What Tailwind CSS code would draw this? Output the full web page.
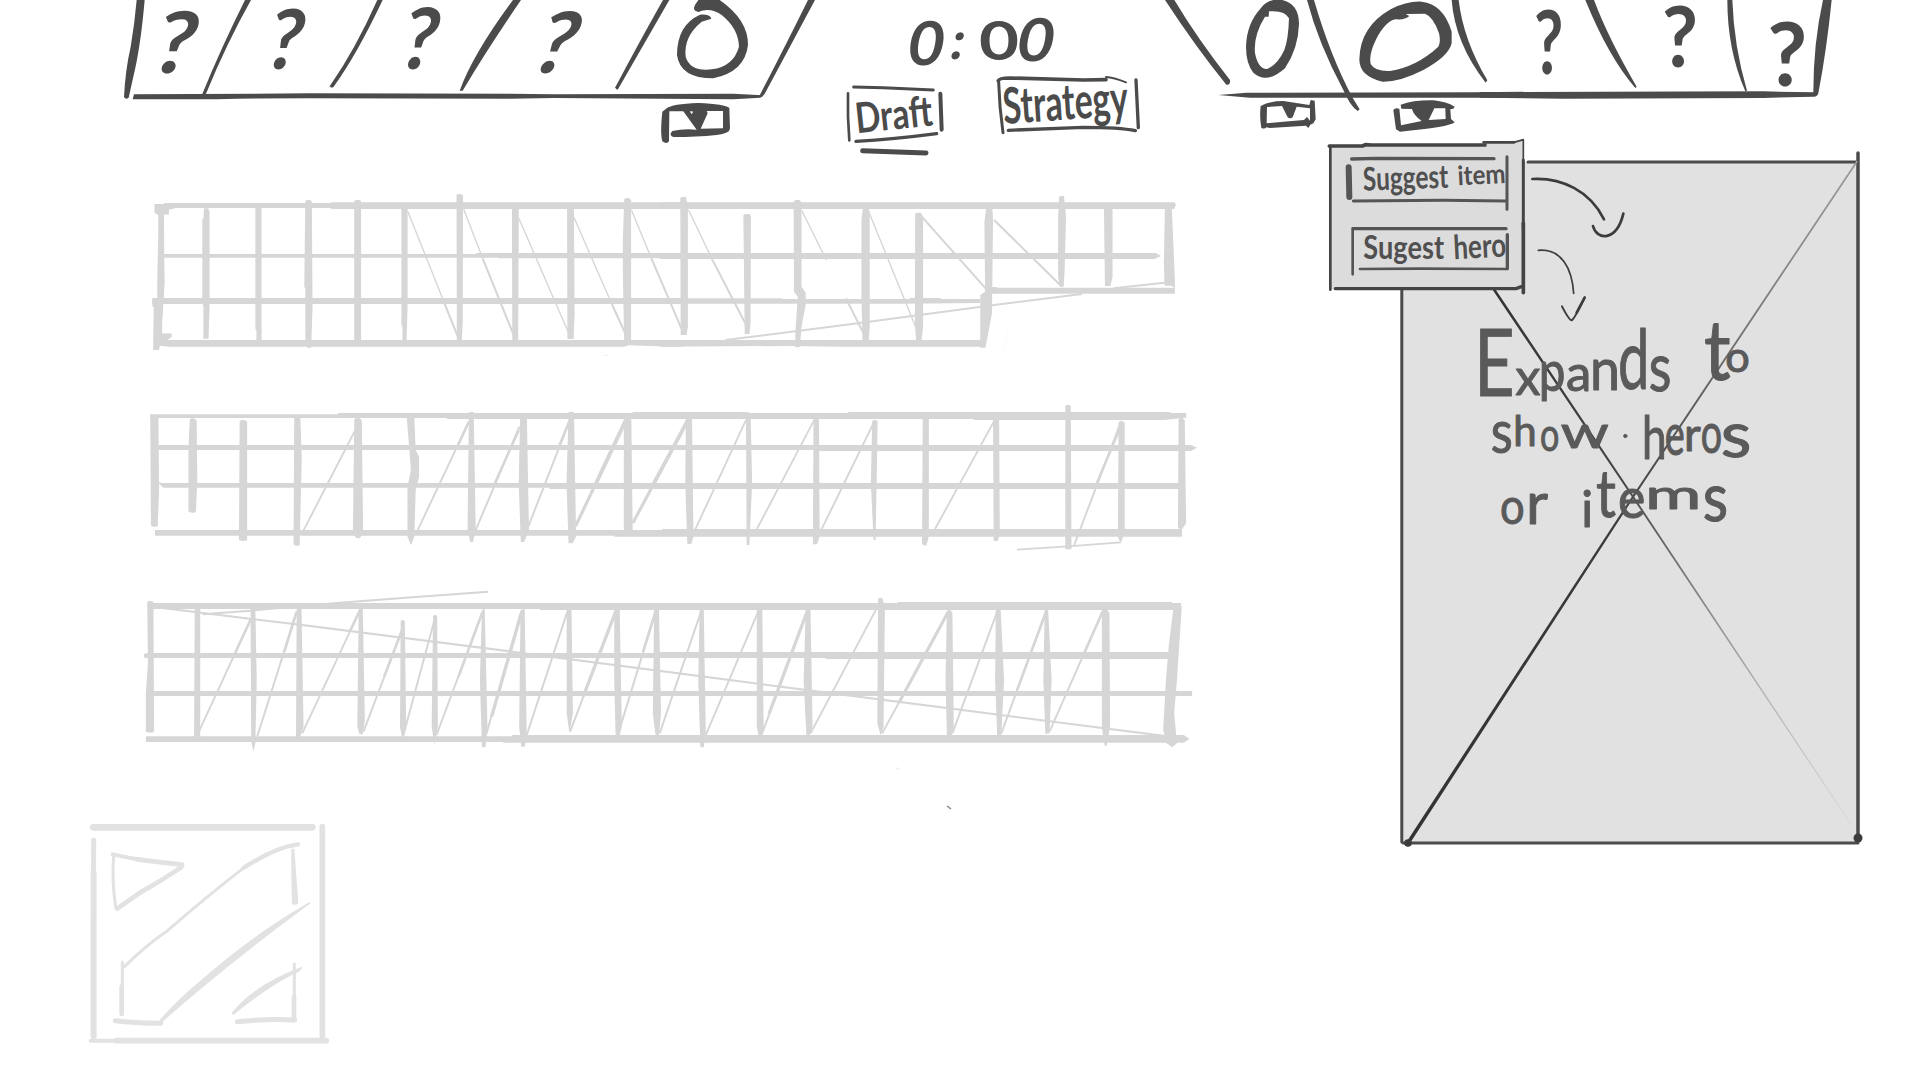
<!DOCTYPE html>
<html lang="en">
<head>
<meta charset="utf-8">
<title>Draft strategy wireframe</title>
<script src="https://cdn.jsdelivr.net/npm/@tailwindcss/browser@4"></script>
</head>
<body class="bg-white">
<div class="flex h-[1080px] w-[1920px] flex-col overflow-hidden bg-white font-[Lato,sans-serif] text-[#4b4b4b]">

<!-- Hero bar, timer and mode buttons -->
<header class="h-[144px] w-full shrink-0">
<svg class="block overflow-visible" width="1920" height="144" viewBox="0 0 1920 144" fill="currentColor">
  <!-- left team slots -->
  <g transform="translate(110 0) scale(.33333)">
    <path d="M80 0H104Q92 140 70 230L56 293Q48 300 42 291Q46 210 62 140Q74 70 80 0Z"/>
    <path d="M72 283L600 280L1200 281V296L600 295L380 296L320 298L68 298Z"/>
    <path d="M405 0H423Q350 130 288 281L276 284Q335 140 405 0Z"/>
    <path d="M802 0H818Q740 165 671 260Q664 266 659 259Q735 150 802 0Z"/>
    <g font-weight="700">
      <text transform="translate(116 218) skewX(-14) scale(1.05 1)" font-size="256">?</text>
      <text transform="translate(458 208) skewX(-12) scale(.93 1)" font-size="248">?</text>
      <text transform="translate(860 208) skewX(-12) scale(.93 1)" font-size="254">?</text>
    </g>
  </g>
  <g transform="translate(450 0) scale(.33333)">
    <path d="M189 0H213Q110 150 38 272L29 272Q70 160 189 0Z"/>
    <path d="M180 281L310 283L850 281L937 286L932 293L850 298L310 294L180 296Z"/>
    <path d="M639 0H658L504 268Q498 271 496 262Q560 140 639 0Z"/>
    <path d="M1074 0H1095L945 280Q936 296 928 288Q1000 150 1074 0Z"/>
    <text transform="translate(234 218) skewX(-20)" font-size="254" font-weight="700">?</text>
    <path d="M745 0H809Q895 60 894 135Q885 215 790 235Q690 235 681 165Q681 75 750 44Q780 42 784 56L755 65Q700 110 707 170Q720 215 785 208Q850 200 867 140Q865 85 815 45Q780 20 745 36Q726 32 735 15Z"/>
    <path d="M650 325Q665 312 745 309Q825 312 838 324L840 385Q840 401 800 405Q740 411 670 411Q655 405 667 393Q700 385 740 389L700 334H658L657 424Q650 434 637 424Q630 400 637 335ZM773 340L752 386L819 385V333H770Z" fill-rule="evenodd"/>
    <path d="M720 333L724 343L730 335Z" fill="white"/>
  </g>

  <!-- timer and mode buttons -->
  <g transform="translate(830 0) scale(.33333)">
    <g font-size="176" font-weight="700">
      <text transform="translate(227 194) skewX(-9)" font-size="182" textLength="106" lengthAdjust="spacingAndGlyphs">0</text>
      <text transform="translate(354 176) skewX(-12)" font-size="160">:</text>
      <text x="447" y="179" font-size="158" textLength="120" lengthAdjust="spacingAndGlyphs">0</text>
      <text transform="translate(554 183) skewX(-10)" font-size="178" textLength="108" lengthAdjust="spacingAndGlyphs">0</text>
    </g>
    <g fill="none" stroke="currentColor" stroke-linecap="round">
      <path d="M71 261L160 263L310 270" stroke-width="9"/>
      <path d="M54 280V350L58 421" stroke-width="8"/>
      <path d="M331 281L335 389" stroke-width="12"/>
      <path d="M78 424Q190 418 320 401" stroke-width="10"/>
      <path d="M98 452L288 459" stroke-width="15"/>
      <path d="M505 242Q508 234 540 234L760 240L828 239" stroke-width="11"/>
      <path d="M828 231Q850 232 888 247" stroke-width="6"/>
      <path d="M506 246Q508 320 519 398" stroke-width="9"/>
      <path d="M535 391L760 382Q870 382 916 392" stroke-width="10"/>
      <path d="M918 240L925 383" stroke-width="10"/>
    </g>
    <g font-weight="700">
      <text transform="translate(80 400) rotate(-6)" font-size="126" textLength="232" lengthAdjust="spacingAndGlyphs">Draft</text>
      <text transform="translate(522 372) rotate(-4)" font-size="150" textLength="376" lengthAdjust="spacingAndGlyphs">Strategy</text>
    </g>
  </g>

  <!-- right team slots -->
  <g transform="translate(1150 0) scale(.33333)">
    <path d="M45 0H73Q145 120 240 240Q242 256 229 254Q140 145 45 0Z"/>
    <path d="M205 285L290 278L970 277L1120 275V293H300Z"/>
    <path d="M471 0H492Q540 165 606 290L629 328L623 333Q600 318 580 270Q505 130 471 0Z"/>
    <path d="M905 0H926Q940 120 1012 241L1007 248Q915 130 905 0Z"/>
    <path d="M333 24Q350 0 385 -2Q447 5 447 72Q445 145 405 205Q350 254 310 218Q288 190 288 140Q290 70 333 24ZM357 34L356 50L345 50Q310 105 315 160Q325 208 351 207Q382 195 403 150Q415 120 417 55Q405 30 357 34Z" fill-rule="evenodd"/>
    <path d="M722 28Q770 3 815 5Q880 12 905 95V130Q895 170 820 210Q750 246 698 245Q628 230 628 178Q630 80 722 28ZM767 42L778 48Q765 60 740 58Q715 57 685 105Q655 160 662 192Q675 215 720 213Q800 200 865 140Q873 125 867 100Q850 50 825 41Z" fill-rule="evenodd"/>
    <path d="M332 318Q360 303 400 303L478 315L482 300L494 302L497 358L490 370L481 374L475 384L468 377L360 384L349 382Q345 388 334 384Q328 350 332 318ZM351 321L350 370L400 365L462 360L471 351L480 362V325L440 320L428 352Q420 358 413 352L396 318Z" fill-rule="evenodd"/>
    <path d="M752 314Q790 300 850 301Q890 305 914 320L910 326L901 328L903 357L914 367Q900 378 830 386L750 395L738 388L730 330Q735 322 748 326L753 376L815 363Q790 345 786 327L754 326ZM853 325L836 360L887 357L886 325Z" fill-rule="evenodd"/>
  </g>
  <g transform="translate(1480 0) scale(.33333)">
    <path d="M0 276L850 274L1000 277Q1000 130 1029 0H1055Q1040 150 1015 280Q1012 291 1000 290L850 294L250 296L0 293Z"/>
    <path d="M316 0H342Q385 115 470 260L466 264Q385 170 316 0Z"/>
    <path d="M742 0H757Q762 140 801 272L796 274Q742 150 742 0Z"/>
    <g font-weight="700">
      <text x="162" y="223" font-size="266" textLength="88" lengthAdjust="spacingAndGlyphs">?</text>
      <text x="546" y="202" font-size="250" textLength="108" lengthAdjust="spacingAndGlyphs">?</text>
      <text x="862" y="257" font-size="266" textLength="120" lengthAdjust="spacingAndGlyphs">?</text>
    </g>
  </g>
</svg>
</header>

<main class="flex min-h-0 flex-1">
<div class="flex w-[1310px] shrink-0 flex-col">

<!-- Hero grids -->
<section class="h-[646px] text-[#d6d6d6]">
<svg class="block overflow-visible" width="1310" height="646" viewBox="0 144 1310 646" fill="currentColor">
  <g transform="translate(140 180) scale(.34439 .33333)">
    <path d="M42 72H70V69H555V67H1575V87H555V84H105L84 90V104H70L72 310L65 430V460H93V470L80 480H1575V500H1545L1420 496L1405 500H82L58 497L55 510H38L40 380H36V354H50V300L53 170V105L42 98Z" />
    <path fill="white" d="M105 84H555V87H1568V480H82L92 470V460H65V430L72 310L70 104H84V90Z"/>
    <path d="M70 222H976V219H1575V235H1040V233H70ZM36 354H1575V372H36Z"/>
    <path d="M186 85H198L202 96V380L199 476H184V378L181 370V118L184 116ZM335 84H353V490H338V450L335 448ZM480 62L485 60H495L499 66L501 380L497 503H485L480 478V325L477 320ZM622 64L627 60H637L642 64V490H622ZM759 85H777V380L774 485H762V440L759 435ZM919 45L924 42H931L938 46L937 430L934 485H920ZM1080 85H1100L1098 485H1081ZM1240 85H1260L1262 400L1259 477H1241ZM1406 58L1411 54H1420L1426 60V490H1406L1402 280V180Z"/>
    <g stroke="currentColor" fill="none" stroke-width="4">
      <path d="M778 95L885 372M940 88L995 235M1100 115L1243 455M1260 112L1370 372M1427 90L1485 235"/>
      <path stroke-width="6" d="M884 370L925 475M995 235L1085 465M1370 372L1410 462M1485 235L1572 445"/>
    </g>
    <path d="M1347 524H1360V528H1347Z" opacity=".35"/>
  </g>
  <g transform="translate(660 180) scale(.34439 .33333)">
    <path d="M0 67H1494L1498 75L1493 87H0ZM0 219H1440L1455 228L1435 237H0ZM0 355H355V357H725V354H815V357H930V369L700 371H0ZM0 480H940V500H520L370 498L0 500ZM945 321H978V323H1495V341H960Z"/>
    <path d="M59 55L63 51H75L77 60L81 80V440L77 465H60ZM242 106L247 102H260L264 108L263 430L260 462H246ZM388 65L393 60H405L411 67V320L423 338V375L411 440L406 502H393V458L400 350L389 335ZM589 85H605L609 95V440L606 485H588L585 350V118ZM741 102L745 98H757L764 110V440L759 485H744L740 430ZM947 85H965L967 120L964 400L945 503H930V345L944 335L942 125ZM1159 50L1163 48H1173L1179 110L1175 270L1172 320H1161L1156 290V110ZM1289 85H1314V290L1308 318H1292ZM1466 85H1486L1491 200L1495 300V325L1485 317H1465L1463 250Z"/>
    <g stroke="currentColor" fill="none" stroke-width="4">
      <path d="M83 90L150 235M412 92L470 213L483 240M608 100L742 440"/>
      <path stroke-width="6" d="M150 235L250 435M762 112L948 328M970 120L1165 318M540 355L592 462M190 480L575 430L965 376L1225 342M1318 325L1465 308"/>
      <path opacity=".2" stroke-width="2" d="M1010 455L995 527"/>
    </g>
  </g>
  <g transform="translate(140 390) scale(.6824 .33333)">
    <path d="M15 73H290V69H722V66H892V69H1038V66H1510V69H1533V83L1500 90H1222V87H450V84H15ZM26 165H1540L1549 173L1540 183H990V180H26ZM26 277L34 279H1531V297H600V293H34ZM22 420H765V417H1527V440H695V437H22Z"/>
    <path d="M15 75H27L28 300L26 408Q20 414 16 406ZM73 88L77 84L83 90L84 270L82 366Q77 372 71 364V180ZM146 92L151 89L157 94V451Q151 456 145 450ZM226 84H235L237 200L234 465Q229 471 225 463ZM314 87L320 82L325 90L327 430L322 445L316 443L312 420ZM391 84H402L404 180L409 200V260L404 300L402 440L397 466L392 440V290L397 240ZM482 66H489L492 420L488 456H484L480 420ZM557 84L567 87L570 420L563 456H558L555 280ZM628 66H636L639 440L634 460H628L625 280ZM709 86L720 88L722 425H709ZM800 86H809L811 440L808 462H802L799 280ZM888 86H895L897 280L893 465H889ZM987 86H995L996 440L992 463H986ZM1073 92L1077 89L1081 94L1078 450H1075L1071 280ZM1147 86H1156V440L1152 468L1146 463ZM1250 88H1259L1260 430L1257 453H1251ZM1356 46Q1360 42 1364 47L1365 478H1356ZM1434 96L1439 92L1443 98V430L1437 460L1433 440ZM1522 86L1527 83L1531 90L1533 400L1527 418L1521 415Z"/>
    <g stroke="currentColor" fill="none" stroke-width="3">
      <path d="M318 110L240 420M482 95L407 420M556 110L492 420M629 95L569 410M888 90L814 417M988 90L904 417M1076 95L999 417M1252 92L1165 417M1437 98L1369 465"/>
      <path stroke-width="4" d="M482 95L466 165M555 120L520 280M629 95L612 180M1437 110L1400 290"/>
      <path stroke-width="5" d="M712 90L638 410M803 90L722 400"/>
      <path stroke-width="6" d="M712 90L666 290M803 90L753 280"/>
      <path stroke-width="5" d="M1285 479L1360 469L1437 457"/>
    </g>
  </g>
  <g transform="translate(130 580) scale(.68878 .33333)">
    <path d="M26 69H1115V66H1513V69H1526V90H595V87H26ZM20 222L26 219H765V216H1507V237H1010V234H21ZM24 333H1542V348H24ZM23 469H555V465H1530L1538 477L1530 488H542V486H23Z"/>
    <path d="M25 65Q30 60 34 66L35 455Q30 462 23 455V340L26 250ZM94 85H102V470H93ZM175 87H182L184 300L182 490L179 515L176 480ZM242 87H249L252 440L247 470H241ZM332 87L338 86L341 420L338 463H333L330 440ZM393 123Q396 117 399 124L401 440L396 488L392 440ZM440 108Q443 102 446 108L447 440L442 494L438 440ZM511 90L515 86L519 440L516 502H511L508 300ZM567 90L573 87L576 470L573 500H568L565 440ZM634 90L641 87L643 400L638 460L634 400ZM703 87H711L714 440L711 467H705L703 300ZM761 87H768L771 400L768 465H763L759 400ZM827 87H833L836 460L833 502H828L825 300ZM910 87H918L920 450L915 490L910 440ZM981 87H988L991 440L987 465H982L978 300ZM1086 56Q1090 50 1093 57L1096 90L1094 440L1090 467L1085 430ZM1186 92L1191 89L1194 99L1196 440L1193 467H1186L1184 300ZM1257 87H1264L1269 300L1265 467H1259L1256 300ZM1328 90L1333 87L1338 300L1335 460L1329 462L1326 300ZM1411 90L1418 87L1422 100L1423 440L1418 497H1415L1411 440ZM1515 80H1527L1520 300L1516 400L1520 490L1513 502L1505 490L1500 450L1504 300L1508 200Z"/>
    <g stroke="currentColor" fill="none" stroke-width="3">
      <path d="M176 115L100 455M242 95L185 468M334 90L250 460M395 150L339 455M442 120L397 465M512 95L445 465M568 95L517 465M635 95L576 465M705 95L639 455M763 95L709 460M829 95L769 460M912 95L836 465M983 95L917 465M1084 85L988 460M1188 95L1092 460M1259 95L1194 460M1330 95L1265 460M1412 95L1335 455"/>
      <path stroke-width="4" d="M176 115L149 235M242 95L224 215M334 90L319 155M395 150L369 290M512 95L477 290M763 95L745 215M1330 95L1288 330M1412 95L1382 235"/>
      <path stroke-width="5" d="M568 100L525 410M705 95L658 350M983 95L928 400M1188 95L1116 370"/>
      <path stroke-width="6" d="M50 85L250 135L555 215L840 292L990 332L1200 388L1500 467M105 103L175 92L300 69L410 52L520 35"/>
    </g>
  </g>
  <path d="M947 806L951 809" stroke="#888" stroke-width="1.5"/>
  <path d="M896 768L899 769" stroke="#eee" stroke-width="1.5"/>
</svg>
</section>

<!-- Game emblem -->
<section class="pt-[10px] pl-[80px] text-[#e2e2e2]">
<svg class="block" width="260" height="260" viewBox="0 0 780 780" fill="none" stroke="currentColor" stroke-linecap="round" stroke-linejoin="round">
  <path stroke-width="20" d="M40 82H697"/>
  <path stroke-width="15" d="M41 120L40 400V710"/>
  <path stroke-width="17" d="M727 80V710"/>
  <path stroke-width="18" d="M41 220V708"/>
  <path stroke-width="12" d="M32 722H742"/>
  <path stroke-width="17" d="M110 722H738"/>
  <path stroke-width="12" d="M98 163Q190 184 306 193"/>
  <path stroke-width="9" d="M101 165Q95 240 107 322"/>
  <path stroke-width="14" d="M170 178L304 194Q310 197 298 206Q240 245 180 278L112 326"/>
  <path stroke-width="9" d="M133 500Q200 435 260 394Q380 290 492 203"/>
  <path stroke-width="13" d="M492 203Q585 142 654 133"/>
  <path fill="currentColor" stroke="none" d="M634 146H643L655 310Q646 318 636 312Q633 230 634 146ZM690 305L692 310Q445 490 247 666L237 662Q300 592 350 552Q515 405 690 305ZM454 640Q520 555 665 500Q670 510 640 523Q550 570 460 645Z"/>
  <path stroke-width="9" d="M127 487V560M643 492V650"/>
  <path stroke-width="14" d="M125 560V642M642 590V660"/>
  <path stroke-width="15" d="M106 662Q160 669 242 670M472 665Q570 655 644 660"/>
</svg>
</section>
</div>

<!-- Suggestion popup and expanding panel -->
<aside class="w-[610px]">
<svg class="block overflow-visible" width="610" height="936" viewBox="1310 144 610 936" fill="none" stroke="currentColor" stroke-linecap="round" stroke-linejoin="round">
  <defs>
    <linearGradient id="rise" gradientUnits="userSpaceOnUse" x1="1408" y1="843" x2="1857" y2="161">
      <stop offset="0" stop-color="#333"/><stop offset=".45" stop-color="#3a3a3a"/><stop offset=".7" stop-color="#6a6a6a"/><stop offset=".85" stop-color="#8a8a8a"/><stop offset="1" stop-color="#999"/>
    </linearGradient>
    <linearGradient id="fall" gradientUnits="userSpaceOnUse" x1="1494" y1="290" x2="1852" y2="828">
      <stop offset="0" stop-color="#333"/><stop offset=".35" stop-color="#444"/><stop offset=".5" stop-color="#707070"/><stop offset=".75" stop-color="#b4b4b4"/><stop offset="1" stop-color="#dcdcdc"/>
    </linearGradient>
  </defs>
  <path d="M1402 162H1858V842H1402Z" fill="#e1e1e1" stroke="none"/>
  <g stroke="#4b4b4b">
    <path stroke-width="3" d="M1401.8 290V842M1403 843H1858"/>
    <path stroke-width="3" d="M1528 162H1857"/>
    <path stroke-width="3.5" d="M1858 153V838"/>
  </g>
  <path fill="url(#rise)" stroke="none" d="M1406.500 842L1630 499.400L1856.600 160.500L1858 161.400L1631.800 500.600L1409.500 844Z"/>
  <path fill="url(#fall)" stroke="none" d="M1492.400 289.600L1494.900 288.600L1631 492L1852.500 825.600L1851.600 826.200L1629.300 493Z"/>
  <circle cx="1408" cy="843" r="3.8" fill="#3c3c3c" stroke="none"/>
  <circle cx="1858" cy="838" r="4.500" fill="#3c3c3c" stroke="none"/>

  <g transform="translate(1310 130) scale(.33333)">
    <path d="M60 48H520L525 38L640 30V478H60Z" fill="#dcdcdc" stroke="none"/>
    <g stroke="#444">
      <path stroke-width="11" d="M58 48H158L166 44L185 45H525"/>
      <path stroke-width="8" d="M521 37H612"/>
      <path stroke-width="5" d="M612 37L640 29V100"/>
      <path stroke-width="8" d="M61 48V479"/>
      <path stroke-width="9" d="M640 90V300"/>
      <path stroke-width="11" d="M640 280V488"/>
      <path stroke-width="10" d="M76 476H618L634 470"/>
    </g>
    <g stroke="#555">
      <path stroke-width="10" d="M125 87L200 85L552 86"/>
      <path stroke-width="18" d="M116 112L118 201"/>
      <path stroke-width="9" d="M130 213L400 211L585 213M591 80V238"/>
      <path stroke-width="8" d="M128 295V433M150 417L330 416L590 417"/>
      <path stroke-width="10" d="M130 296H588M592 314V416"/>
    </g>
    <g fill="#505050" stroke="none" font-weight="700">
      <text transform="translate(160 182) rotate(-2)" font-size="98" textLength="256" lengthAdjust="spacingAndGlyphs">Suggest</text>
      <text transform="translate(444 166) rotate(-3)" font-size="80" textLength="144" lengthAdjust="spacingAndGlyphs">item</text>
      <text transform="translate(160 388)" font-size="98" textLength="242" lengthAdjust="spacingAndGlyphs">Sugest</text>
      <text transform="translate(432 388) rotate(-3)" font-size="100" textLength="158" lengthAdjust="spacingAndGlyphs">hero</text>
    </g>
    <g stroke="#3c3c3c">
      <path stroke-width="8" d="M667 147C755 142 840 183 882 268M849 288C860 332 920 335 940 251"/>
      <path stroke-width="5" d="M685 361C755 355 786 415 791 490"/>
      <path stroke-width="6" d="M756 529Q777 570 785 571Q794 566 824 502"/>
      <path stroke-width="8" d="M800 548L824 503"/>
    </g>
  </g>

  <!-- panel note, set letter by letter to keep its hand-lettered rhythm -->
  <g transform="translate(1400 290) scale(.33333)" fill="#5a5a5a" stroke="#5a5a5a" stroke-width="3">
    <text><tspan font-size="282" x="222" y="318" textLength="122" lengthAdjust="spacingAndGlyphs">E</tspan><tspan x="346" y="316" font-size="152">x</tspan><tspan x="416" y="304" font-size="170" textLength="80" lengthAdjust="spacingAndGlyphs">p</tspan><tspan x="498" y="304" font-size="148" textLength="76" lengthAdjust="spacingAndGlyphs">a</tspan><tspan x="570" y="300" font-size="172" textLength="90" lengthAdjust="spacingAndGlyphs">n</tspan><tspan x="654" y="298" font-size="252" textLength="94" lengthAdjust="spacingAndGlyphs">d</tspan><tspan x="746" y="304" font-size="202" textLength="68" lengthAdjust="spacingAndGlyphs">s</tspan></text>
    <text><tspan x="912" y="270" font-size="250" textLength="80" lengthAdjust="spacingAndGlyphs">t</tspan><tspan x="976" y="246" font-size="130">o</tspan></text>
    <text><tspan x="272" y="488" font-size="182" textLength="66" lengthAdjust="spacingAndGlyphs">s</tspan><tspan x="340" y="468" font-size="126">h</tspan><tspan x="420" y="482" font-size="140" textLength="58" lengthAdjust="spacingAndGlyphs">o</tspan><tspan x="482" y="474" font-size="134" textLength="144" lengthAdjust="spacingAndGlyphs">w</tspan></text>
    <circle cx="676" cy="438" r="5"/>
    <text><tspan x="726" y="506" font-size="180" textLength="74" lengthAdjust="spacingAndGlyphs">h</tspan><tspan x="794" y="494" font-size="172" textLength="60" lengthAdjust="spacingAndGlyphs">e</tspan><tspan x="852" y="482" font-size="138">r</tspan><tspan x="902" y="490" font-size="168" textLength="64" lengthAdjust="spacingAndGlyphs">o</tspan><tspan x="962" y="500" font-size="190" textLength="92" lengthAdjust="spacingAndGlyphs">s</tspan></text>
    <text><tspan x="300" y="702" font-size="148" textLength="74" lengthAdjust="spacingAndGlyphs">o</tspan><tspan x="378" y="702" font-size="172" textLength="66" lengthAdjust="spacingAndGlyphs">r</tspan></text>
    <text><tspan x="544" y="710" font-size="148">i</tspan><tspan x="588" y="682" font-size="200" textLength="60" lengthAdjust="spacingAndGlyphs">t</tspan><tspan x="654" y="684" font-size="168" textLength="82" lengthAdjust="spacingAndGlyphs">e</tspan><tspan x="736" y="658" font-size="122" textLength="168" lengthAdjust="spacingAndGlyphs">m</tspan><tspan x="908" y="694" font-size="202" textLength="76" lengthAdjust="spacingAndGlyphs">s</tspan></text>
  </g>
</svg>
</aside>
</main>
</div>
</body>
</html>
